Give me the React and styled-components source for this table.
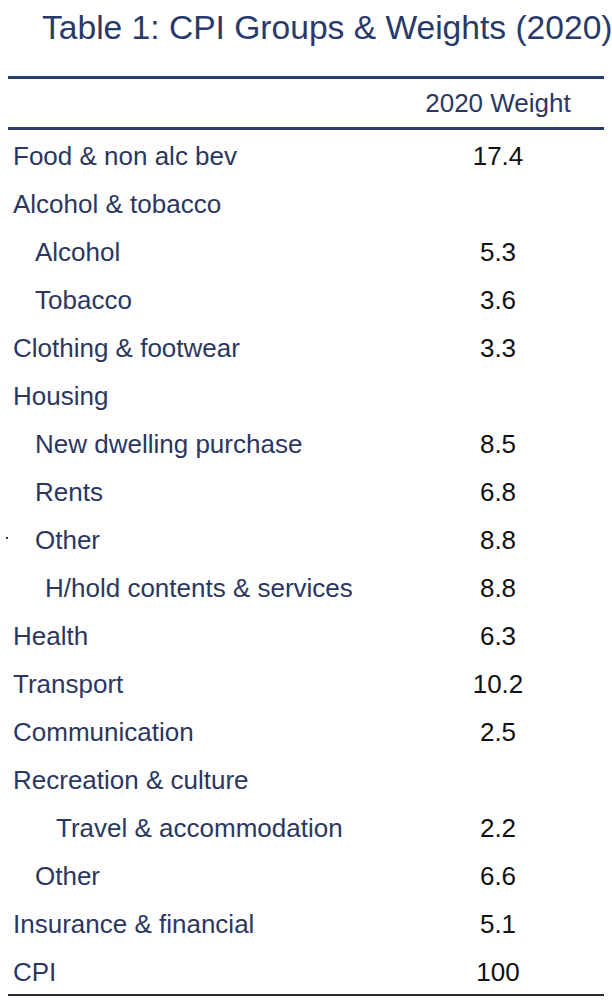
import React from 'react'
import styled, { createGlobalStyle } from 'styled-components'

const GlobalStyle = createGlobalStyle`
  body {
    margin: 0;
    background: #fff;
    font-family: "Liberation Sans", Arial, Helvetica, sans-serif;
  }
`

const Page = styled.div`
  width: 612px;
  height: 1006px;
  background: #fff;
  overflow: hidden;
`
const Title = styled.h1`
  margin: 0 0 28px 0;
  padding: 8px 0 0 42px;
  height: 40px;
  line-height: 40px;
  font-size: 33.6px;
  font-weight: 400;
  color: #283a6b;
  white-space: nowrap;
`
const Table = styled.table`
  margin: 0 8px;
  width: 596px;
  border-collapse: collapse;
  border-top: 3px solid #2b3b6b;
  border-bottom: 2px solid #2a2a2a;
  font-size: 26px;
  table-layout: fixed;
`
const HeadRow = styled.tr`
  height: 48px;
  border-bottom: 3px solid #2b3b6b;
  box-shadow: 0 1px 0 #d3d8e3;
`
const Th = styled.th`
  padding: 1px 0 0;
  font-weight: 400;
  color: #2b3760;
  text-align: center;
  line-height: 47px;
`
const Row = styled.tr`
  height: 48px;
`
const Label = styled.td`
  position: relative;
  padding: 4px 0 0 ${p => [5, 27, 37, 48][p.$level]}px;
  line-height: 44px;
  color: #2b3760;
  white-space: nowrap;
`
const Value = styled.td`
  padding: 4px 0 0;
  text-align: center;
  line-height: 44px;
  color: #111;
`
const Dot = styled.span`
  position: absolute;
  left: -2px;
  top: 23px;
  width: 2px;
  height: 2px;
  background: #333;
`

const rows = [
  ['Food & non alc bev', 0, '17.4'],
  ['Alcohol & tobacco', 0, ''],
  ['Alcohol', 1, '5.3'],
  ['Tobacco', 1, '3.6'],
  ['Clothing & footwear', 0, '3.3'],
  ['Housing', 0, ''],
  ['New dwelling purchase', 1, '8.5'],
  ['Rents', 1, '6.8'],
  ['Other', 1, '8.8', true],
  ['H/hold contents & services', 2, '8.8'],
  ['Health', 0, '6.3'],
  ['Transport', 0, '10.2'],
  ['Communication', 0, '2.5'],
  ['Recreation & culture', 0, ''],
  ['Travel & accommodation', 3, '2.2'],
  ['Other', 1, '6.6'],
  ['Insurance & financial', 0, '5.1'],
  ['CPI', 0, '100'],
]

function App() {
  return (
    <Page>
      <GlobalStyle />
      <Title>Table 1: CPI Groups &amp; Weights (2020)</Title>
      <Table>
        <colgroup>
          <col style={{ width: 384 }} />
          <col style={{ width: 212 }} />
        </colgroup>
        <thead>
          <HeadRow>
            <Th></Th>
            <Th>2020 Weight</Th>
          </HeadRow>
        </thead>
        <tbody>
          {rows.map(([name, level, value, mark], i) => (
            <Row key={i}>
              <Label $level={level}>
                {mark ? <Dot /> : null}
                {name}
              </Label>
              <Value>{value}</Value>
            </Row>
          ))}
        </tbody>
      </Table>
    </Page>
  )
}

export default App
